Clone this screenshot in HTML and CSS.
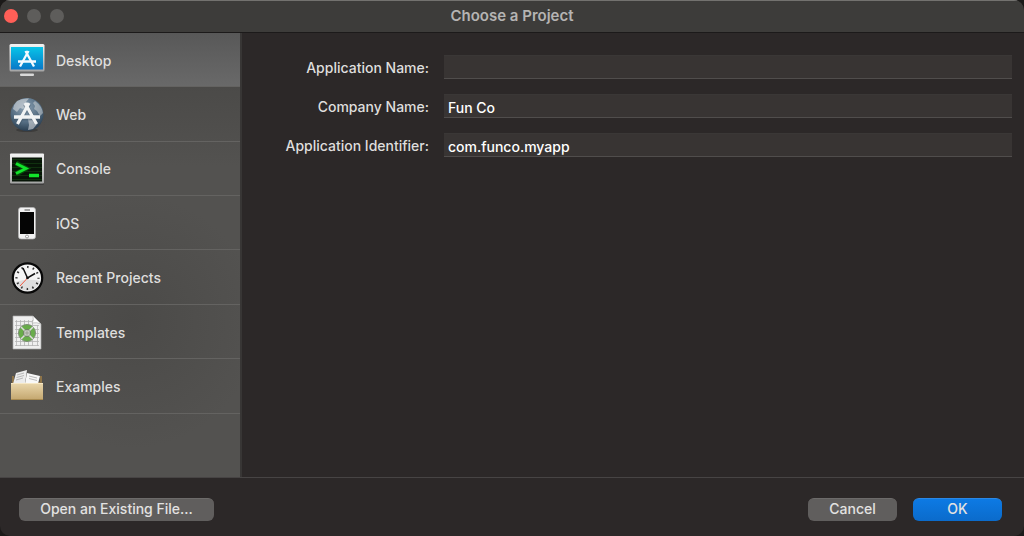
FILE: index.html
```html
<!DOCTYPE html>
<html lang="en">
<head>
  <meta charset="utf-8">
  <title>Choose a Project</title>
  <link rel="stylesheet" href="styles.css">
</head>
<body>
  <form class="window">
    <header class="titlebar">
      <div class="lights">
        <button type="button" class="light close" aria-label="Close"></button>
        <button type="button" class="light" aria-label="Minimize"></button>
        <button type="button" class="light" aria-label="Zoom"></button>
      </div>
      <h1>Choose a Project</h1>
    </header>

    <div class="content">
      <nav class="sidebar">
        <a href="#desktop" class="item selected">
          <svg class="icon" viewBox="0 0 36 36">
            <defs>
              <linearGradient id="screen" x1="0" y1="0" x2="0" y2="1">
                <stop offset="0" stop-color="#08c4e8"/>
                <stop offset="1" stop-color="#0878c8"/>
              </linearGradient>
              <linearGradient id="silver" x1="0" y1="0" x2="0" y2="1">
                <stop offset="0" stop-color="#f4f4f4"/>
                <stop offset="1" stop-color="#a4a4a4"/>
              </linearGradient>
            </defs>
            <rect x="0.5" y="2" width="35" height="27.500" rx="1.500" fill="url(#silver)"/>
            <rect x="2" y="5" width="32" height="22.500" fill="url(#screen)"/>
            <rect x="11" y="31.500" width="14" height="2.500" rx="1" fill="#d8d8d8"/>
            <g stroke="#f6fbff" fill="none">
              <path d="M19.500 9L11 24.500M16.500 9L25 24.500" stroke-width="2.300"/>
              <path d="M9 19.500H27" stroke-width="2.700"/>
            </g>
          </svg>
          Desktop
        </a>
        <a href="#web" class="item">
          <svg class="icon" viewBox="0 0 36 36">
            <defs>
              <radialGradient id="globe" cx="0.45" cy="0.3" r="0.75">
                <stop offset="0" stop-color="#8da3b5"/>
                <stop offset="0.6" stop-color="#536b80"/>
                <stop offset="1" stop-color="#233648"/>
              </radialGradient>
            </defs>
            <ellipse cx="18" cy="33" rx="11" ry="2" fill="#2c2c2c" opacity="0.5"/>
            <circle cx="18" cy="17.500" r="16.500" fill="url(#globe)"/>
            <path d="M8 4Q13 1 20 1.500L17 5L19 8L14 12L11 11L8 15L4 12Q5 7 8 4Z" fill="#d5d9dc" opacity="0.6"/>
            <path d="M26 4Q33 9 34 16L31 19L28 14L25 12L26 9L24 6Z" fill="#d5d9dc" opacity="0.5"/>
            <path d="M19 22L26 23L29 26L24 32L19 33L20 28Z" fill="#d5d9dc" opacity="0.6"/>
            <g stroke="#2d4152" fill="none" opacity="0.3">
              <path d="M20 7L9 27M16 7L28 27" stroke-width="4.500"/>
              <path d="M5 21H31" stroke-width="5"/>
            </g>
            <g stroke="#f1f3f4" fill="none">
              <path d="M20 6L8.500 27M16 6L27.500 27" stroke-width="3.200"/>
              <path d="M5 20H31" stroke-width="3.400"/>
            </g>
          </svg>
          Web
        </a>
        <a href="#console" class="item">
          <svg class="icon" viewBox="0 0 36 36">
            <rect x="1" y="3" width="34" height="31" rx="1" fill="#303030" opacity="0.6"/>
            <rect x="1" y="2.500" width="34" height="30" rx="1" fill="url(#silver)"/>
            <rect x="3" y="6.500" width="30" height="24" fill="#071407"/>
            <path d="M3 8.500H33M3 12.500H33M3 16.500H33M3 20.500H33M3 24.500H33M3 28.500H33" stroke="#10310f"/>
            <path d="M7 12L17 17.500L7 23M20 24.500H30" stroke="#064d08" stroke-width="5" fill="none"/>
            <path d="M7 12.500L17 17.500L7 22.500M20 24.500H30" stroke="#12e32b" stroke-width="2.800" fill="none"/>
          </svg>
          Console
        </a>
        <a href="#ios" class="item">
          <svg class="icon" viewBox="0 0 36 36">
            <rect x="9.500" y="2.500" width="17" height="31.500" rx="2.500" fill="#f2f2f2" stroke="#b5b5b5" stroke-width="0.700"/>
            <rect x="11" y="7" width="14" height="22" fill="#050505"/>
            <path d="M15.500 5H21" stroke="#555"/>
            <circle cx="18" cy="31.500" r="1.500" fill="#fff" stroke="#777" stroke-width="0.700"/>
          </svg>
          iOS
        </a>
        <a href="#recent" class="item">
          <svg class="icon" viewBox="0 0 36 36">
            <circle cx="18.500" cy="18" r="14.700" fill="#f5f5f5" stroke="#080808" stroke-width="2.200"/>
            <path d="M6.200 22A13 13 0 0 0 31 21Q19 18 6.200 22Z" fill="#dedede"/>
            <circle cx="18.500" cy="18" r="11" fill="none" stroke="#333" stroke-width="2.200" stroke-dasharray="1.500 4.260" stroke-dashoffset="0.750"/>
            <path d="M18.500 18L11 26" stroke="#f2583f"/>
            <path d="M14 8L18.500 18L26 13.500" stroke="#111" stroke-width="1.500" fill="none"/>
            <circle cx="18.500" cy="18" r="1.300" fill="#111"/>
          </svg>
          Recent Projects
        </a>
        <a href="#templates" class="item">
          <svg class="icon" viewBox="0 0 36 36">
            <path d="M4 2H24L32 10V35H4Z" fill="#efefef" stroke="#aaa" stroke-width="0.700"/>
            <path d="M7.500 6V32M11.500 6V32M15.500 6V32M19.500 6V32M23.500 6V32M28.500 11V32M6 7.500H23M6 11.500H30M6 15.500H30M6 19.500H30M6 23.500H30M6 27.500H30M6 31.500H30" stroke="#b4b4b4" stroke-width="0.800"/>
            <circle cx="18" cy="19" r="8.500" fill="#68ad4a" stroke="#7b8e74"/>
            <circle cx="18" cy="19" r="3.700" fill="#c8ccc5" stroke="#637c57"/>
            <path d="M12 13L15.500 16.500M24 13L20.500 16.500M12 25L15.500 21.500M24 25L20.500 21.500" stroke="#ddd" stroke-width="1.500"/>
            <path d="M18 15V23M14 19H22" stroke="#89957f" stroke-width="0.700"/>
            <path d="M24 2Q25 7 23 9Q28 8 32 10Z" fill="#fff" stroke="#b0b0b0" stroke-width="0.700"/>
          </svg>
          Templates
        </a>
        <a href="#examples" class="item">
          <svg class="icon" viewBox="0 0 36 36">
            <defs>
              <linearGradient id="box" x1="0" y1="0" x2="0" y2="1">
                <stop offset="0" stop-color="#ead7ac"/>
                <stop offset="1" stop-color="#c3a66e"/>
              </linearGradient>
            </defs>
            <path d="M3 8H5V14H31V8H33V16H3Z" fill="#8d7348"/>
            <path d="M4 16L7 5L18 2L16 16Z" fill="#ececec"/>
            <path d="M16 16L18 5L31 8L29 16Z" fill="#f8f8f8"/>
            <path d="M8 7L15 5M7.500 9.500L15 7.500M7 12L14 10M20 8L28 10M20 10.500L28 12.500" stroke="#aaa" stroke-width="0.800"/>
            <path d="M2 15H34V32H2Z" fill="url(#box)"/>
            <path d="M2 15.500H34" stroke="#f6e8c6"/>
            <path d="M2 31.500H34" stroke="#a88a50"/>
          </svg>
          Examples
        </a>
      </nav>

      <main class="fields">
        <label for="appName">Application Name:</label>
        <input type="text" id="appName">
        <label for="companyName">Company Name:</label>
        <input type="text" id="companyName" value="Fun Co">
        <label for="appId">Application Identifier:</label>
        <input type="text" id="appId" value="com.funco.myapp">
      </main>
    </div>

    <footer class="buttons">
      <button type="button" class="open">Open an Existing File...</button>
      <button type="button">Cancel</button>
      <button type="submit" class="primary">OK</button>
    </footer>
  </form>
</body>
</html>
```
FILE: styles.css
```css
* {
  box-sizing: border-box;
}

body {
  margin: 0;
  background-color: #1b1a19;
  color: #dfdedd;
  font-family: Inter, "Liberation Sans", sans-serif;
  font-size: 14px;
  font-weight: 500;
}

.window {
  display: flex;
  flex-direction: column;
  height: 100vh;
  background-color: #2c2828;
  border-radius: 10px;
  overflow: hidden;
}

/* Title bar */
.titlebar {
  display: grid;
  grid-template-columns: 1fr auto 1fr;
  align-items: center;
  height: 33px;
  padding-bottom: 2px;
  background-color: #3d3c3a;
  border-top: 1px solid #73726f;
  border-bottom: 1px solid #1c1a1a;
}

.titlebar h1 {
  margin: 0;
  font-size: 15px;
  font-weight: 600;
  color: #b5b4b3;
}

.lights {
  display: flex;
  gap: 9px;
  padding-left: 4px;
}

.light {
  width: 14px;
  height: 14px;
  padding: 0;
  border: none;
  border-radius: 50%;
  background-color: #5e5d5b;
}

.light.close {
  background-color: #ff5f57;
}

.content {
  display: flex;
  flex: 1;
}

/* Project types, with an empty strip below the last one */
.sidebar {
  display: grid;
  grid-template-rows: repeat(7, 6fr) 7fr;
  width: 242px;
  border-right: 2px solid #383635;
  background: radial-gradient(circle at 55% 65%, #4b4a48, transparent 40%), linear-gradient(#464543, #535250 30%, #535250);
}

.item {
  display: flex;
  align-items: center;
  gap: 11px;
  padding: 1px 0 0 9px;
  border-bottom: 1px solid #646361;
  color: #dfdedd;
  text-decoration: none;
}

.item.selected {
  background: linear-gradient(#585858, #696969);
}

.icon {
  width: 36px;
  height: 36px;
}

/* Form */
.fields {
  flex: 1;
  display: grid;
  grid-template-columns: 187px 1fr;
  grid-auto-rows: 24px;
  gap: 15px;
  align-content: start;
  align-items: center;
  padding: 22px 12px 0 0;
}

.fields label {
  text-align: right;
}

.fields input {
  width: 100%;
  height: 24px;
  padding: 2px 4px 0;
  border: none;
  border-top: 1px solid #3a3736;
  border-bottom: 1px solid #504d4c;
  background-color: #383433;
  color: #fff;
  font: inherit;
  outline: none;
}

/* Bottom buttons */
.buttons {
  display: flex;
  align-items: center;
  gap: 16px;
  height: 59px;
  padding: 5px 22px 0 19px;
  border-top: 1px solid #474444;
}

.buttons button {
  width: 89px;
  height: 23px;
  padding: 0 0 3px;
  border: none;
  border-top: 1px solid #6d6b6a;
  border-radius: 6px;
  background-color: #605e5d;
  color: #e3e2e1;
  font: inherit;
}

.buttons .open {
  width: 195px;
  margin-right: auto;
}

.buttons .primary {
  border-top-color: #2b88e6;
  background: linear-gradient(#0d7ae4, #0b6bcb);
}
```
